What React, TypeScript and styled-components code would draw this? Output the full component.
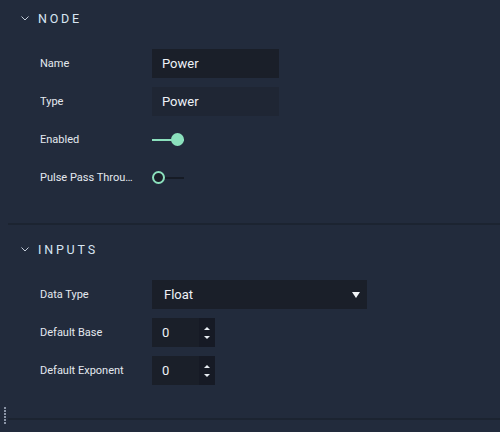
import React from 'react';
import styled, { createGlobalStyle } from 'styled-components';

const GlobalStyle = createGlobalStyle`
  html, body {
    margin: 0;
    padding: 0;
    background: #222b3c;
  }
  * {
    box-sizing: border-box;
  }
`;

const Panel = styled.div`
  position: relative;
  width: 500px;
  height: 432px;
  overflow: hidden;
  background: #222b3c;
  font-family: Roboto, 'Liberation Sans', sans-serif;
  color: #e6ecf3;
`;

const Section = styled.section<{ $top: number; $bottom: number }>`
  margin-left: 8px;
  padding-top: ${p => p.$top}px;
  padding-bottom: ${p => p.$bottom}px;
  border-bottom: 2px solid #1c2431;
`;

const Header = styled.div`
  height: 34px;
  display: flex;
  align-items: center;
  gap: 9px;
  padding-left: 13px;
`;

const HeaderTitle = styled.span`
  font-size: 12.5px;
  font-weight: 400;
  letter-spacing: 2.8px;
  color: #d7e5f3;
`;

const Rows = styled.div`
  display: flex;
  flex-direction: column;
  gap: 9px;
  padding-top: 14px;
  padding-left: 32px;
`;

const Row = styled.div`
  display: grid;
  grid-template-columns: 112px 1fr;
  align-items: center;
  height: 29px;
`;

const Label = styled.span`
  padding-right: 17px;
  font-size: 11px;
  font-weight: 400;
  color: #e4e9ef;
  white-space: nowrap;
  overflow: hidden;
  text-overflow: ellipsis;
`;

const TextBox = styled.div<{ $readOnly?: boolean }>`
  width: 127px;
  height: 29px;
  display: flex;
  align-items: center;
  padding-left: 10px;
  font-size: 13px;
  color: #eef2f7;
  background: ${p => (p.$readOnly ? '#1f2634' : '#1a1f29')};
`;

const Select = styled.div`
  width: 215px;
  height: 29px;
  display: flex;
  align-items: center;
  justify-content: space-between;
  padding: 0 7px 0 12px;
  font-size: 13px;
  color: #eef2f7;
  background: #1a1f29;
`;

const NumberBox = styled.div`
  width: 63px;
  height: 29px;
  display: flex;
  background: #1a1f29;
`;

const NumberValue = styled.div`
  flex: 1;
  display: flex;
  align-items: center;
  padding-left: 10px;
  font-size: 13px;
  color: #eef2f7;
`;

const Spinner = styled.div`
  width: 16px;
  display: flex;
  flex-direction: column;
  align-items: center;
  justify-content: center;
  gap: 6px;
  background: #161a25;
`;

const Toggle = styled.div`
  position: relative;
  width: 32px;
  height: 13px;
  display: flex;
  align-items: center;
`;

const Track = styled.div<{ $on: boolean }>`
  width: 100%;
  height: 2px;
  background: ${p => (p.$on ? '#8be0bd' : '#161b25')};
`;

const Knob = styled.div<{ $on: boolean }>`
  position: absolute;
  top: 0;
  ${p => (p.$on ? 'right: 0;' : 'left: 0;')}
  width: 13px;
  height: 13px;
  border-radius: 50%;
  background: ${p => (p.$on ? '#8be0bd' : '#1a1f29')};
  border: 2px solid #8be0bd;
`;

const Grip = styled.div`
  position: absolute;
  left: 4px;
  bottom: 8px;
  display: flex;
  flex-direction: column;
  gap: 1px;
`;

const GripDot = styled.span`
  width: 2px;
  height: 2px;
  background: #8a94a6;
`;

const Chevron = () => (
  <svg width="8" height="5" viewBox="0 0 8 5">
    <path d="M0.5 0.5 L4 4 L7.5 0.5" fill="none" stroke="#c3ccd8" strokeWidth="1" />
  </svg>
);

const Caret = () => (
  <svg width="8" height="6" viewBox="0 0 8 6">
    <path d="M0 0 H8 L4 6 Z" fill="#f2f5f8" />
  </svg>
);

const SpinArrow = ({ up }: { up?: boolean }) => (
  <svg width="6" height="3" viewBox="0 0 6 3">
    <path d={up ? 'M0 3 H6 L3 0 Z' : 'M0 0 H6 L3 3 Z'} fill="#e8edf3" />
  </svg>
);

const NumberInput = ({ value }: { value: number }) => (
  <NumberBox>
    <NumberValue>{value}</NumberValue>
    <Spinner>
      <SpinArrow up />
      <SpinArrow />
    </Spinner>
  </NumberBox>
);

const Switch = ({ on }: { on: boolean }) => (
  <Toggle>
    <Track $on={on} />
    <Knob $on={on} />
  </Toggle>
);

export default function App() {
  return (
    <Panel>
      <GlobalStyle />
      <Section $top={1} $bottom={31}>
        <Header>
          <Chevron />
          <HeaderTitle>NODE</HeaderTitle>
        </Header>
        <Rows>
          <Row>
            <Label>Name</Label>
            <TextBox>Power</TextBox>
          </Row>
          <Row>
            <Label>Type</Label>
            <TextBox $readOnly>Power</TextBox>
          </Row>
          <Row>
            <Label>Enabled</Label>
            <Switch on />
          </Row>
          <Row>
            <Label>Pulse Pass Through</Label>
            <Switch on={false} />
          </Row>
        </Rows>
      </Section>
      <Section $top={7} $bottom={33}>
        <Header>
          <Chevron />
          <HeaderTitle>INPUTS</HeaderTitle>
        </Header>
        <Rows>
          <Row>
            <Label>Data Type</Label>
            <Select>
              <span>Float</span>
              <Caret />
            </Select>
          </Row>
          <Row>
            <Label>Default Base</Label>
            <NumberInput value={0} />
          </Row>
          <Row>
            <Label>Default Exponent</Label>
            <NumberInput value={0} />
          </Row>
        </Rows>
      </Section>
      <Grip>
        {Array.from({ length: 6 }, (_, i) => (
          <GripDot key={i} />
        ))}
      </Grip>
    </Panel>
  );
}
